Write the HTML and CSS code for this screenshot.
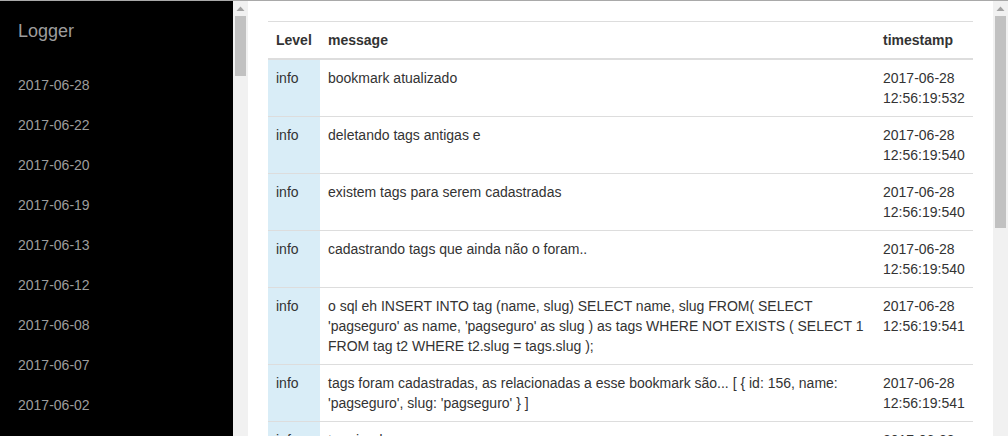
FILE: index.html
```html
<!DOCTYPE html>
<html>
<head>
<meta charset="utf-8">
<title>Logger</title>
<link rel="stylesheet" href="styles.css">
</head>
<body>
<div class="app">
  <div class="sidebar">
    <nav class="sidebar-inner">
      <h1 class="brand">Logger</h1>
      <ul class="dates">
        <li>2017-06-28</li><li>2017-06-22</li><li>2017-06-20</li><li>2017-06-19</li>
        <li>2017-06-13</li><li>2017-06-12</li><li>2017-06-08</li><li>2017-06-07</li>
        <li>2017-06-02</li><li>2017-06-01</li><li>2017-05-31</li>
      </ul>
    </nav>
    <div class="scrollbar">
      <div class="sb-up"><svg width="15" height="15" viewBox="0 0 15 15"><polygon points="3.5,10 11.5,10 7.5,5.5" fill="#a3a3a3"/></svg></div>
      <div class="sb-thumb sb-thumb-side"></div>
    </div>
  </div>
  <div class="content">
    <main class="main">
      <table class="log">
        <thead>
          <tr><th class="col-level">Level</th><th>message</th><th class="col-ts">timestamp</th></tr>
        </thead>
        <tbody>
          <tr><td class="lvl">info</td><td>bookmark atualizado</td><td>2017-06-28 12:56:19:532</td></tr>
          <tr><td class="lvl">info</td><td>deletando tags antigas e</td><td>2017-06-28 12:56:19:540</td></tr>
          <tr><td class="lvl">info</td><td>existem tags para serem cadastradas</td><td>2017-06-28 12:56:19:540</td></tr>
          <tr><td class="lvl">info</td><td>cadastrando tags que ainda não o foram..</td><td>2017-06-28 12:56:19:540</td></tr>
          <tr><td class="lvl">info</td><td>o sql eh INSERT INTO tag (name, slug) SELECT name, slug FROM( SELECT 'pagseguro' as name, 'pagseguro' as slug ) as tags WHERE NOT EXISTS ( SELECT 1 FROM tag t2 WHERE t2.slug = tags.slug );</td><td>2017-06-28 12:56:19:541</td></tr>
          <tr><td class="lvl">info</td><td>tags foram cadastradas, as relacionadas a esse bookmark são... [ { id: 156, name: 'pagseguro', slug: 'pagseguro' } ]</td><td>2017-06-28 12:56:19:541</td></tr>
          <tr><td class="lvl">info</td><td>terminado</td><td>2017-06-28 12:56:19:542</td></tr>
        </tbody>
      </table>
    </main>
    <div class="scrollbar">
      <div class="sb-up"><svg width="15" height="15" viewBox="0 0 15 15"><polygon points="3.5,10 11.5,10 7.5,5.5" fill="#a3a3a3"/></svg></div>
      <div class="sb-thumb sb-thumb-main"></div>
    </div>
  </div>
</div>
</body>
</html>
```

FILE: styles.css
```css
* { box-sizing: border-box; }
html, body { margin: 0; padding: 0; height: 100%; }
body {
  font-family: "Liberation Sans", Arial, sans-serif;
  font-size: 14px;
  line-height: 20px;
  color: #333;
  background: #fff;
  border-top: 1px solid #a9a9a9;
  overflow: hidden;
}
.app {
  display: flex;
  height: 435px;
}
.sidebar {
  flex: 0 0 248px;
  display: flex;
  height: 100%;
}
.sidebar-inner {
  flex: 1;
  background: #000;
  overflow: hidden;
}
.brand {
  margin: 0;
  padding: 20px 18px 24px;
  font-size: 18px;
  line-height: 20px;
  font-weight: normal;
  color: #9d9d9d;
}
.dates {
  list-style: none;
  margin: 0;
  padding: 0;
}
.dates li {
  padding: 10px 18px;
  line-height: 20px;
  color: #9d9d9d;
}
.content {
  flex: 1;
  display: flex;
  height: 100%;
  min-width: 0;
}
.main {
  flex: 1;
  min-width: 0;
  overflow: hidden;
  padding: 20px;
}
.log {
  width: 100%;
  border-collapse: collapse;
  border-spacing: 0;
}
.log th, .log td {
  padding: 8px;
  text-align: left;
  vertical-align: top;
  border-top: 1px solid #ddd;
  line-height: 20px;
}
.log th {
  font-weight: bold;
  border-bottom: 2px solid #ddd;
}
.col-level { width: 52px; }
.col-ts { width: 98px; }
.log td.lvl { background: #d9edf7; }

/* scrollbars */
.scrollbar {
  flex: 0 0 15px;
  width: 15px;
  background: #f1f1f1;
  display: flex;
  flex-direction: column;
}
.sb-up {
  height: 15px;
  flex: 0 0 15px;
}
.sb-up svg { display: block; }
.sb-thumb {
  margin: 0 2px;
  background: #c1c1c1;
}
.sb-thumb-side { height: 60px; }
.sb-thumb-main { height: 212px; }
```
